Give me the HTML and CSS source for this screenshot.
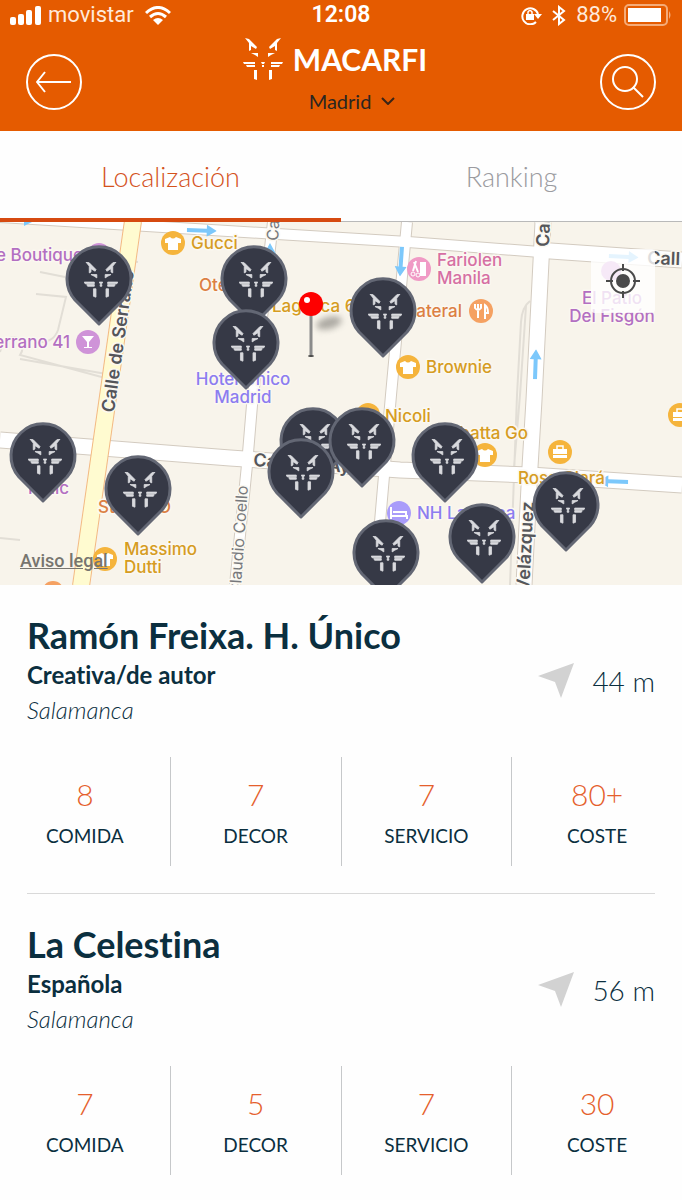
FILE: index.html
```
<!DOCTYPE html>
<html lang="es">
	<head>
		<meta charset="utf-8">
		<meta name="viewport" content="width=device-width, initial-scale=1">
		<title>Macarfi</title>
		<link rel="stylesheet" href="styles.css">
	</head>
	<body>
		<!-- shared icons -->
		<svg class="sprite" aria-hidden="true">
			<symbol id="cat" viewBox="0 0 40 43">
				<path d="M2 0 L6 1 L14 9 L13 11 L8 8 V12 L6 13 V5Z M38 0 L34 1 L26 9 L27 11 L32 8 V12 L34 13 V5Z"/>
				<path d="M8 15 H15 V19 L12 17Z M32 15 H25 V19 L28 17Z"/>
				<path d="M0 24 H12 V26 H1Z M3 27 H12 V29 H4Z M40 24 H28 V26 H39Z M37 27 H28 V29 H36Z"/>
				<path d="M18 24 H22 L21 26 H19Z M19 27 H21 V29 H19Z M11 32 H14 V42 L11 41Z M29 32 H26 V42 L29 41Z"/>
			</symbol>
			<symbol id="pin" viewBox="-35 -35 70 84" overflow="visible">
				<path class="pin-shape" d="M0 45 L-24 21 A32 32 0 1 1 24 21Z"/>
				<use href="#cat" class="pin-cat" x="-15" y="-17" width="34" height="36"/>
			</symbol>
			<symbol id="shirt" viewBox="-12 -12 24 24">
				<circle r="12" fill="#f5b43c"/>
				<path fill="#fff" d="M-3 -6 Q0 -3 3 -6 L8 -4 L8 0 L5 0 V7 H-5 V0 H-8 V-4Z"/>
			</symbol>
			<symbol id="bag" viewBox="-12 -12 24 24">
				<circle r="12" fill="#f5b43c"/>
				<path fill="#fff" d="M-7 -3 H7 V2 H-7Z M-7 3 H7 V6 H-7Z"/>
				<path fill="none" stroke="#fff" stroke-width="1.5" d="M-3 -3 V-6 H3 V-3"/>
			</symbol>
			<symbol id="arrow" viewBox="0 -6 30 12">
				<path fill="#7cc8fb" d="M0 -2 H20 V-6 L30 0 L20 6 V2 H0Z"/>
			</symbol>
			<symbol id="near" viewBox="0 0 36 36">
				<path fill="#d2d2d2" d="M36 0 L23 35 L17 19 L0 13Z"/>
			</symbol>
		</svg>

		<header class="header">
			<div class="status">
				<div class="status-side">
					<svg width="31" height="19" viewBox="0 0 31 19" fill="#fff"><rect y="11" width="6" height="8" rx="2"/><rect x="8" y="8" width="6" height="11" rx="2"/><rect x="16" y="4" width="6" height="15" rx="2"/><rect x="25" width="6" height="19" rx="2"/></svg>
					<span>movistar</span>
					<svg class="wifi" width="26" height="19" viewBox="0 0 26 19"><path fill="none" stroke="#fff" stroke-width="3" d="M1 7 Q13 -4 25 7 M5 11 Q13 4 21 11"/><path fill="#fff" d="M8 14 Q13 10 18 14 L13 19Z"/></svg>
				</div>
				<strong class="clock">12:08</strong>
				<div class="status-side status-right">
					<svg width="21" height="19" viewBox="0 0 21 19"><path fill="none" stroke="#fff" stroke-width="2" d="M15 16 A8 8 0 1 1 17 8"/><path fill="#fff" d="M13 8 H21 L17 13Z M5 8 H13 V14 H5Z"/><path fill="none" stroke="#fff" stroke-width="1.5" d="M7 8 V6 Q9 3 11 6 V8"/></svg>
					<svg class="bluetooth" width="14" height="21" viewBox="0 0 14 21"><path fill="none" stroke="#fff" stroke-width="2" d="M1 6 L12 15 L7 19 V2 L12 6 L1 15"/></svg>
					<span>88%</span>
					<svg width="48" height="22" viewBox="0 0 48 22"><rect x="1" y="1" width="42" height="20" rx="4" fill="none" stroke="#f5ab78" stroke-width="2"/><rect x="4" y="4" width="33" height="14" fill="#fff"/><path fill="#f5ab78" d="M45 7 Q48 11 45 15Z"/></svg>
				</div>
			</div>
			<div class="navbar">
				<button class="round-btn" aria-label="Volver">
					<svg width="36" height="22" viewBox="0 0 36 22" fill="none" stroke="#fff" stroke-width="2"><path d="M9 1 L1 11 L9 21 M1 11 H35"/></svg>
				</button>
				<div class="brand">
					<h1><svg width="40" height="43" fill="#fff"><use href="#cat"/></svg>MACARFI</h1>
					<button class="city">Madrid <svg width="14" height="8" viewBox="0 0 14 8" fill="none" stroke="#3a2416" stroke-width="2"><path d="M1 1 L7 7 L13 1"/></svg></button>
				</div>
				<button class="round-btn" aria-label="Buscar">
					<svg width="32" height="32" viewBox="0 0 32 32" fill="none" stroke="#fff" stroke-width="2"><circle cx="13" cy="13" r="12"/><path d="M21 21 L31 31"/></svg>
				</button>
			</div>
		</header>

		<nav class="tabs">
			<a href="#localizacion" class="active">Localización</a>
			<a href="#ranking">Ranking</a>
		</nav>

		<section class="map" id="localizacion">
			<svg class="map-canvas" viewBox="0 0 682 363" preserveAspectRatio="xMidYMid slice">
				<defs>
					<filter id="soft" x="-50%" y="-50%" width="200%" height="200%"><feGaussianBlur stdDeviation="3"/></filter>
				</defs>
				<!-- alleys -->
				<g class="alley">
					<path d="M40 50 L65 55 M36 72 L66 75 L58 108 Q54 120 40 120 M0 130 Q4 112 18 116 Q26 124 20 133 L120 160 M20 137 L118 154 M74 31 L100 36 L138 40"/>
					<path d="M530 79 Q522 85 521 100 L517 173 L510 363 M526 84 L520 173 L514 245"/>
					<path d="M0 316 L20 318"/>
				</g>
				<!-- streets: outline first, then white on top -->
				<g class="street street-edge">
					<path class="w10" d="M0 -5 L277 12 L408 20 L540 30"/>
					<path class="w15" d="M536 28 L682 38"/>
					<path class="w15" d="M0 218 L230 236 L400 248 L530 253 L682 263"/>
					<path class="w10" d="M273 0 L252 183 L247 243 L235 363"/>
					<path class="w10" d="M407 0 L391 173 L380 300 L376 363"/>
					<path class="w15" d="M543 0 L534 178 L530 245 L524 363"/>
				</g>
				<g class="street">
					<path class="w10" d="M0 -5 L277 12 L408 20 L540 30"/>
					<path class="w15" d="M536 28 L682 38"/>
					<path class="w15" d="M0 218 L230 236 L400 248 L530 253 L682 263"/>
					<path class="w10" d="M273 0 L252 183 L247 243 L235 363"/>
					<path class="w10" d="M407 0 L391 173 L380 300 L376 363"/>
					<path class="w15" d="M543 0 L534 178 L530 245 L524 363"/>
				</g>
				<path class="avenue-edge" d="M133 -1 L81 364"/>
				<path class="avenue" d="M133 -1 L81 364"/>

				<!-- one way arrows -->
				<use href="#arrow" width="30" height="12" transform="translate(187 2) rotate(2)"/>
				<use href="#arrow" width="30" height="12" transform="translate(408 25) rotate(94)"/>
				<use href="#arrow" width="30" height="12" transform="translate(529 157) rotate(-88)"/>
				<use href="#arrow" width="30" height="12" transform="translate(628 266) rotate(182)"/>
				<use href="#arrow" width="30" height="12" transform="translate(609 28) rotate(3)"/>
				<path fill="#7cc8fb" d="M264 32 L270 21 L276 32Z M24 0 H32 L24 4Z"/>

				<!-- street names -->
				<g class="road-name">
					<text transform="translate(114 191) rotate(-82)">Calle de Serrano</text>
					<text transform="translate(549 25) rotate(-88)">Cal</text>
					<text transform="translate(529 370) rotate(-87)">Velázquez</text>
					<text transform="translate(253 244) rotate(4)">Calle de Ayala</text>
					<text transform="translate(647 42) rotate(2)">Call</text>
				</g>
				<g class="road-name light">
					<text transform="translate(278 19) rotate(-86)">Ca</text>
					<text transform="translate(248 264) rotate(-86)" text-anchor="end">Claudio Coello</text>
				</g>

				<!-- places -->
				<g class="shop">
					<use href="#shirt" x="161" y="9" width="24" height="24"/><text x="191" y="27">Gucci</text>
					<text x="272" y="90">Lagasca 61</text>
					<use href="#shirt" x="396" y="133" width="24" height="24"/><text x="426" y="151">Brownie</text>
					<use href="#shirt" x="356" y="181" width="24" height="24"/><text x="385" y="200">Nicoli</text>
					<use href="#shirt" x="473" y="221" width="24" height="24"/><text x="528" y="217" text-anchor="end">Ciabatta Go</text>
					<use href="#bag" x="548" y="218" width="24" height="24"/>
					<use href="#bag" x="668" y="181" width="24" height="24"/>
					<text x="518" y="262">Rosa Clará</text>
					<use href="#shirt" x="93" y="325" width="24" height="24"/><text x="124" y="333">Massimo</text><text x="124" y="351">Dutti</text>
				</g>
				<g class="bar">
					<circle cx="99" cy="33" r="12"/>
					<text x="-4" y="39">e Boutique</text>
					<text x="70" y="126" text-anchor="end">errano 41</text>
					<circle cx="88" cy="120" r="12"/>
					<path fill="#fff" d="M82 114 H94 L89 120 V125 H92 V126 H84 V125 H87 V120Z"/>
					<text x="69" y="272" text-anchor="end">Tonic</text>
					<circle cx="611" cy="49" r="10"/>
					<text x="612" y="82" text-anchor="middle">El Patio</text>
					<text x="612" y="100" text-anchor="middle">Del Fisgón</text>
				</g>
				<g class="food">
					<text x="199" y="69">Otero</text>
					<text x="462" y="95" text-anchor="end">Lateral</text>
					<circle cx="481" cy="89" r="12"/>
					<path fill="none" stroke="#fff" stroke-width="2" d="M475 82 V86 Q478 90 481 86 V82 M478 82 V96 M485 97 V83 Q488 85 488 91 H485"/>
					<text x="98" y="291">StreetXO</text>
					<circle cx="53" cy="370" r="11"/>
				</g>
				<g class="beauty">
					<circle cx="419" cy="47" r="12"/>
					<path fill="#fff" d="M420 40 H426 V54 H420Z"/>
					<path fill="none" stroke="#fff" stroke-width="2" d="M416 39 L413 49 M414 40 L418 50"/>
					<circle class="ring" cx="413" cy="52" r="2"/><circle class="ring" cx="418" cy="53" r="2"/>
					<text x="437" y="44">Fariolen</text><text x="437" y="62">Manila</text>
				</g>
				<g class="hotel">
					<text x="243" y="163" text-anchor="middle">Hotel Único</text>
					<text x="243" y="181" text-anchor="middle">Madrid</text>
					<circle cx="399" cy="291" r="12"/>
					<path fill="none" stroke="#fff" stroke-width="2" d="M391 285 V297 M391 294 H407 V297 M393 290 H406 V294"/>
					<text x="417" y="297">NH Lagasca</text>
				</g>

				<!-- user position -->
				<ellipse cx="329" cy="101" rx="13" ry="6" fill="#8d8a84" opacity=".7" filter="url(#soft)" transform="rotate(-15 329 101)"/>
				<path stroke="#8b8b8b" stroke-width="3" d="M311 92 V133"/>
				<ellipse cx="311" cy="134" rx="3" ry="1" fill="#444"/>
				<circle cx="311" cy="82" r="12" fill="#fe0000"/>
				<circle cx="307" cy="78" r="3" fill="#fff"/>

				<!-- restaurants -->
				<use href="#pin" x="64" y="22" width="70" height="84"/>
				<use href="#pin" x="219" y="22" width="70" height="84"/>
				<use href="#pin" x="211" y="86" width="70" height="84"/>
				<use href="#pin" x="348" y="54" width="70" height="84"/>
				<use href="#pin" x="8" y="199" width="70" height="84"/>
				<use href="#pin" x="103" y="232" width="70" height="84"/>
				<use href="#pin" x="278" y="184" width="70" height="84"/>
				<use href="#pin" x="327" y="184" width="70" height="84"/>
				<use href="#pin" x="266" y="215" width="70" height="84"/>
				<use href="#pin" x="410" y="199" width="70" height="84"/>
				<use href="#pin" x="351" y="296" width="70" height="84"/>
				<use href="#pin" x="447" y="280" width="70" height="84"/>
				<use href="#pin" x="531" y="248" width="70" height="84"/>
			</svg>
			<button class="locate" aria-label="Mi ubicación">
				<svg width="36" height="36" viewBox="0 0 36 36" fill="none" stroke="#4a4a4a" stroke-width="2"><circle cx="18" cy="18" r="12"/><circle cx="18" cy="18" r="6" fill="#4a4a4a"/><path d="M18 1 V8 M18 28 V35 M1 18 H8 M28 18 H35"/></svg>
			</button>
			<a href="#legal" class="legal">Aviso legal</a>
		</section>

		<main>
			<article class="card">
				<div class="card-top">
					<div>
						<h2>Ramón Freixa. H. Único</h2>
						<p class="kind">Creativa/de autor</p>
						<p class="area">Salamanca</p>
					</div>
					<div class="distance"><svg width="36" height="36"><use href="#near"/></svg>44 m</div>
				</div>
				<dl class="scores">
					<div><dt>COMIDA</dt><dd>8</dd></div>
					<div><dt>DECOR</dt><dd>7</dd></div>
					<div><dt>SERVICIO</dt><dd>7</dd></div>
					<div><dt>COSTE</dt><dd>80+</dd></div>
				</dl>
			</article>
			<article class="card">
				<div class="card-top">
					<div>
						<h2>La Celestina</h2>
						<p class="kind">Española</p>
						<p class="area">Salamanca</p>
					</div>
					<div class="distance"><svg width="36" height="36"><use href="#near"/></svg>56 m</div>
				</div>
				<dl class="scores">
					<div><dt>COMIDA</dt><dd>7</dd></div>
					<div><dt>DECOR</dt><dd>5</dd></div>
					<div><dt>SERVICIO</dt><dd>7</dd></div>
					<div><dt>COSTE</dt><dd>30</dd></div>
				</dl>
			</article>
		</main>
	</body>
</html>
```
FILE: styles.css
```
*{
	margin: 0;padding: 0;
	box-sizing: border-box;
}
body{
	background-color: #fefefe;
	color: #0b2f3f;
	font-family: Lato, "Open Sans", sans-serif;
	font-variant-ligatures: none;
}
button{
	border: 0;
	background: none;
	font: inherit;
	cursor: pointer;
}
a{
	text-decoration: none;
}
svg{
	flex: none;
}
.sprite{
	display: block;
	width: 0;height: 0;
}

/* header */
.header{
	height: 131px;
	background-color: #e55b00;
	color: #fff;
}
.status{
	display: flex;
	align-items: center;
	height: 30px;
	padding: 0 10px;
	font: 22px/30px Roboto, sans-serif;
}
.status-side{
	display: flex;
	flex: 1;
	align-items: center;
	gap: 7px;
}
.status-side span{
	color: #ffeadb;
}
.wifi{
	margin-left: 4px;
}
.bluetooth{
	margin: 0 3px;
}
.status-right{
	justify-content: flex-end;
}
.clock{
	font-size: 23px;
	font-weight: 600;
}
.navbar{
	display: flex;
	justify-content: space-between;
	padding: 0 26px;
}
.round-btn{
	display: flex;
	align-items: center;
	justify-content: center;
	width: 56px;height: 56px;
	margin-top: 24px;
	border: 2px solid #fff;
	border-radius: 50%;
}
.brand{
	display: flex;
	flex-direction: column;
	align-items: center;
}
.brand h1{
	display: flex;
	align-items: center;
	gap: 10px;
	height: 58px;
	padding-right: 12px;
	font-size: 30px;
	line-height: 40px;
}
.city{
	display: flex;
	align-items: center;
	gap: 10px;
	padding-left: 22px;
	color: #2b2620;
	font-size: 20px;
	line-height: 26px;
}

/* tabs */
.tabs{
	display: flex;
	height: 91px;
	border-bottom: 1px solid #b9b9b9;
}
.tabs a{
	flex: 1;
	height: 91px;
	border-bottom: 4px solid transparent;
	color: #9b9ba0;
	font-size: 27px;
	font-weight: 300;
	line-height: 91px;
	text-align: center;
}
.tabs .active{
	border-color: #d64a10;
	color: #d4521c;
}

/* map */
.map{
	position: relative;
	height: 363px;
	overflow: hidden;
	background-color: #f8f4eb;
}
.map-canvas{
	display: block;
	width: 100%;height: 100%;
	font: 500 17px Inter, Roboto, sans-serif;
}
.alley{
	fill: none;
	stroke: #e2ded6;
	stroke-width: 2;
}
.street{
	fill: none;
	stroke: #fff;
}
.street .w10{
	stroke-width: 10;
}
.street .w15{
	stroke-width: 15;
}
.street-edge{
	stroke: #d3cbc0;
}
.street-edge .w10{
	stroke-width: 12;
}
.street-edge .w15{
	stroke-width: 17;
}
.avenue-edge{
	stroke: #f3b983;
	stroke-width: 18;
}
.avenue{
	stroke: #fffbd0;
	stroke-width: 16;
}
/* light halo behind every label */
.map-canvas text{
	paint-order: stroke;
	stroke: #fbf8f1;
	stroke-width: 3px;
	stroke-linejoin: round;
}
.road-name{
	fill: #55565a;
	font-size: 18px;
	font-weight: 600;
}
.road-name.light{
	fill: #77787c;
	font-size: 16px;
	font-weight: 400;
}
.shop{ fill: #d69c22; }
.bar text{ fill: #b36fc2; }
.bar circle{ fill: #cf93d8; }
.food text{ fill: #dc7f43; }
.food circle{ fill: #f5a162; }
.beauty text{ fill: #d66fa3; }
.beauty circle{ fill: #f09ac5; }
.beauty .ring{ fill: none;stroke: #fff; }
.hotel text{ fill: #8c7df0; }
.hotel circle{ fill: #a99cfa; }

.pin-shape{
	fill: #363946;
	stroke: #636774;
	stroke-width: 3;
	stroke-linejoin: round;
}
.pin-cat{
	fill: #d9dade;
	stroke: #d9dade;
	stroke-width: 1;
}
.locate{
	display: flex;
	position: absolute;
	top: 27px;
	right: 27px;
	align-items: center;
	justify-content: center;
	width: 64px;height: 64px;
	border-radius: 4px;
	background-color: rgba(255,255,255,.8);
}
.legal{
	position: absolute;
	bottom: 14px;
	left: 20px;
	color: #77756f;
	font: 500 18px/20px Roboto, sans-serif;
	text-decoration: underline;
}

/* restaurant list */
.card{
	margin: 0 27px;
	padding: 30px 0 27px;
}
.card + .card{
	border-top: 1px solid #d9d9d9;
	padding-bottom: 24px;
}
.card-top{
	display: flex;
	justify-content: space-between;
}
.card h2{
	font-size: 36px;
	line-height: 40px;
}
.kind{
	font-size: 24px;
	font-weight: 700;
	line-height: 40px;
}
.area{
	font-size: 24px;
	font-style: italic;
	font-weight: 300;
	line-height: 30px;
}
.distance{
	display: flex;
	align-items: center;
	gap: 18px;
	height: 36px;
	margin-top: 48px;
	font-size: 28px;
	font-weight: 300;
}
.scores{
	display: flex;
	margin: 32px -27px 0;
}
.scores div{
	display: flex;
	flex: 1;
	flex-direction: column-reverse;
	justify-content: flex-end;
	height: 109px;
	padding-top: 12px;
	border-left: 1px solid #c6c8ca;
	text-align: center;
}
.scores div:first-child{
	border-left: 0;
}
.scores dt{
	font-size: 19px;
	line-height: 34px;
}
.scores dd{
	color: #e5602c;
	font-size: 30px;
	font-weight: 300;
	line-height: 50px;
}
```
